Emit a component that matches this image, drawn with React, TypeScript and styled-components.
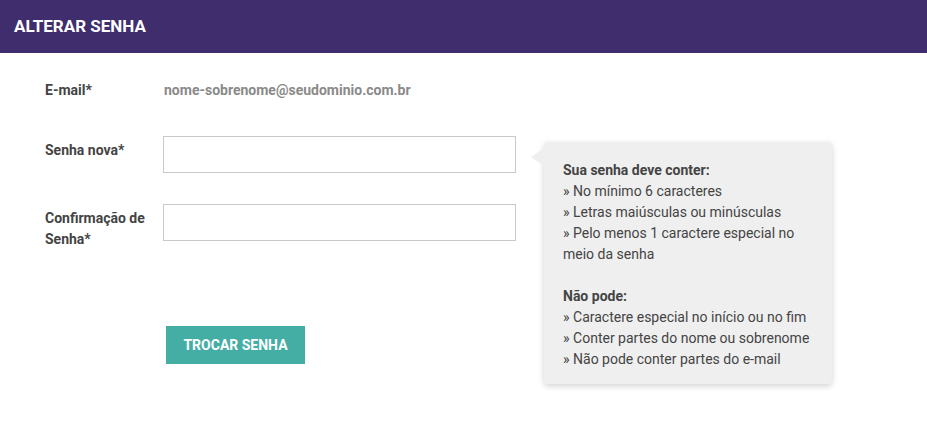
import React from 'react';
import styled, { createGlobalStyle } from 'styled-components';

const GlobalStyle = createGlobalStyle`
  * { box-sizing: border-box; }
  body {
    margin: 0;
    background: #ffffff;
    font-family: Roboto, "Liberation Sans", Arial, sans-serif;
    color: #444444;
  }
`;

const rules = {
  must: ['No mínimo 6 caracteres', 'Letras maiúsculas ou minúsculas', 'Pelo menos 1 caractere especial no meio da senha'],
  mustNot: ['Caractere especial no início ou no fim', 'Conter partes do nome ou sobrenome', 'Não pode conter partes do e-mail'],
};

const App = () => {
  return (
    <Page>
      <GlobalStyle />
      <Header>
        <span className="title">ALTERAR SENHA</span>
      </Header>
      <Body>
        <Row>
          <Label>E-mail*</Label>
          <EmailValue>nome-sobrenome@seudominio.com.br</EmailValue>
        </Row>
        <FieldRow>
          <Label>Senha nova*</Label>
          <FieldWrap>
            <Input type="password" />
            <Tooltip>
              <TooltipTitle>Sua senha deve conter:</TooltipTitle>
              {rules.must.map(r => (
                <div key={r}>» {r}</div>
              ))}
              <Spacer />
              <TooltipTitle>Não pode:</TooltipTitle>
              {rules.mustNot.map(r => (
                <div key={r}>» {r}</div>
              ))}
            </Tooltip>
          </FieldWrap>
        </FieldRow>
        <FieldRow>
          <Label>
            Confirmação de
            <br />
            Senha*
          </Label>
          <FieldWrap>
            <Input type="password" />
          </FieldWrap>
        </FieldRow>
        <Actions>
          <SubmitButton>TROCAR SENHA</SubmitButton>
        </Actions>
      </Body>
    </Page>
  );
};

const Page = styled.div`
  width: 927px;
  min-height: 426px;
`;

const Header = styled.div`
  height: 53px;
  background: #3f2d6d;
  display: flex;
  align-items: center;
  padding: 0 14px 1px;
  .title {
    color: #ffffff;
    font-weight: 700;
    font-size: 17px;
  }
`;

const Body = styled.div`
  padding: 27px 0 0 45px;
  display: flex;
  flex-direction: column;
`;

const Row = styled.div`
  display: flex;
  align-items: flex-start;
  line-height: 21px;
`;

const FieldRow = styled(Row)`
  margin-top: 35px;
  & + & {
    margin-top: 31px;
  }
`;

const Label = styled.div`
  width: 118px;
  flex-shrink: 0;
  font-size: 14px;
  font-weight: 700;
  color: #444444;
  line-height: 21px;
  ${FieldRow} & {
    padding-top: 4px;
  }
`;

const EmailValue = styled.div`
  font-size: 14px;
  font-weight: 700;
  color: #8a8a8a;
  padding-left: 1px;
`;

const FieldWrap = styled.div`
  position: relative;
`;

const Input = styled.input`
  display: block;
  width: 353px;
  height: 37px;
  border: 1px solid #c8c8c8;
  border-radius: 0;
  background: #ffffff;
  padding: 0 10px;
  font-family: inherit;
  font-size: 14px;
  outline: none;
`;

const Tooltip = styled.div`
  position: absolute;
  left: 381px;
  top: 6px;
  width: 288px;
  padding: 18px 19px 14px 19px;
  background: #efefef;
  border-radius: 4px;
  box-shadow: 0 2px 6px rgba(0, 0, 0, 0.18);
  font-size: 14px;
  line-height: 21px;
  color: #444444;
  &::before {
    content: '';
    position: absolute;
    left: -13px;
    top: 6px;
    border-style: solid;
    border-width: 9px 13px 9px 0;
    border-color: transparent #efefef transparent transparent;
  }
`;

const TooltipTitle = styled.div`
  font-weight: 700;
`;

const Spacer = styled.div`
  height: 21px;
`;

const Actions = styled.div`
  padding: 76px 0 0 121px;
`;

const SubmitButton = styled.button`
  display: block;
  height: 38px;
  width: 139px;
  border: none;
  border-radius: 0;
  background: #44ada4;
  color: #ffffff;
  font-family: inherit;
  font-size: 14px;
  font-weight: 700;
  cursor: pointer;
`;

export default App;
